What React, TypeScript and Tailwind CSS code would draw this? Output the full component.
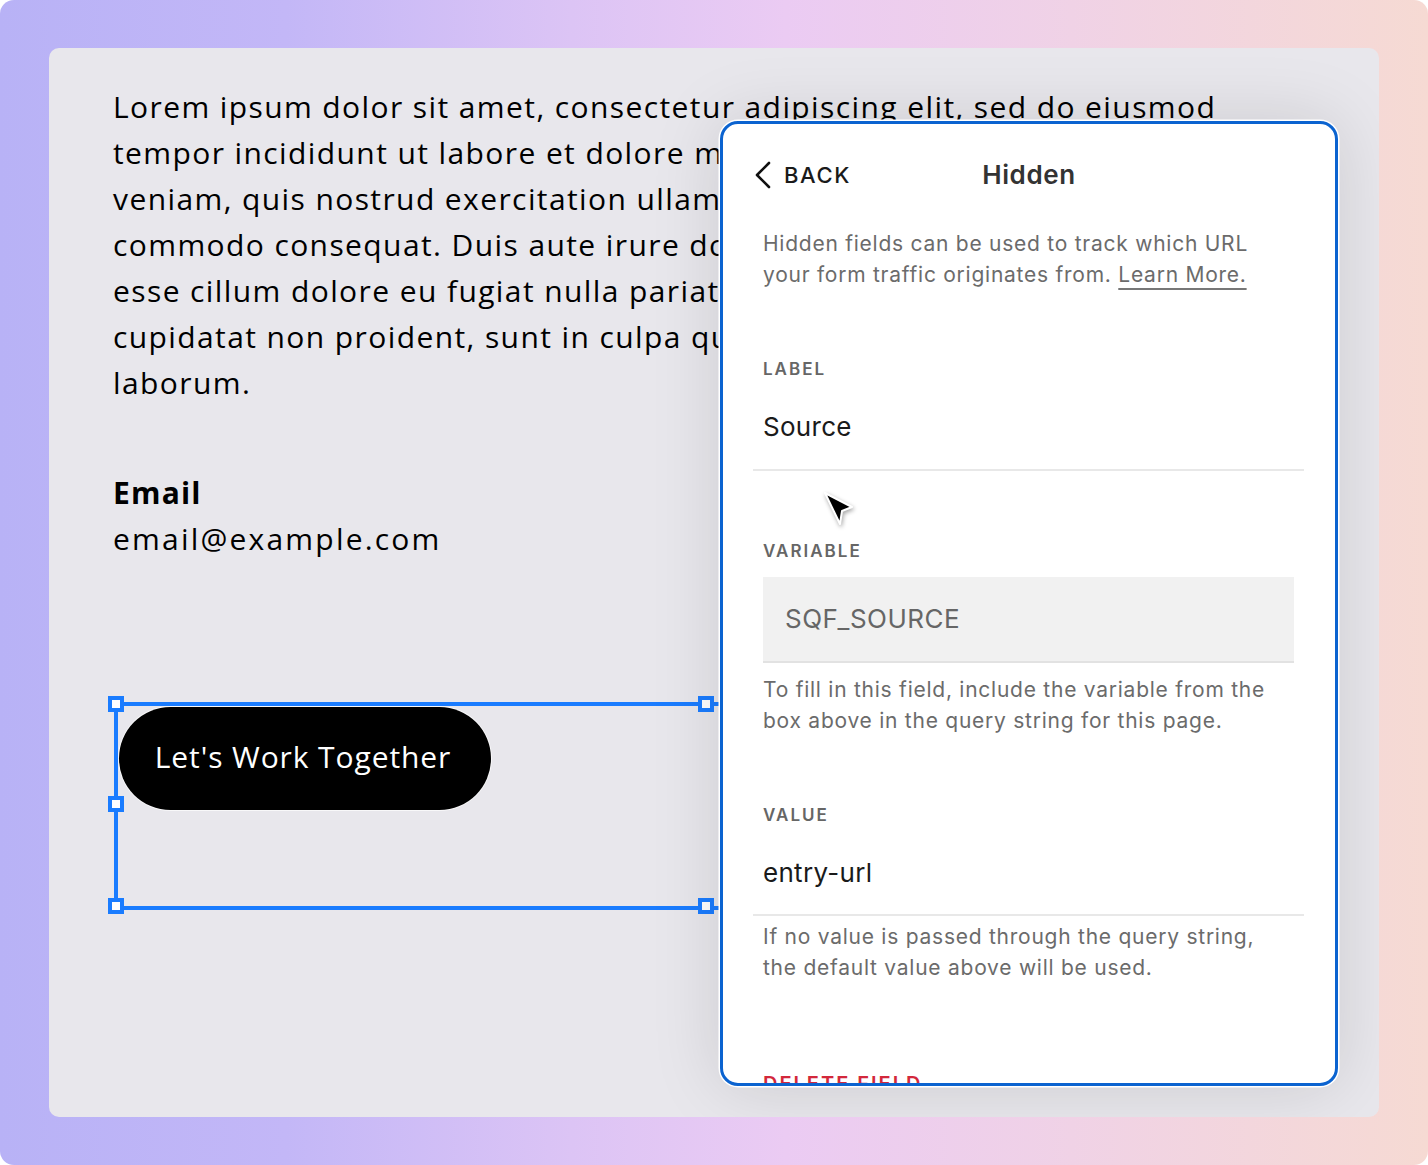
import React from "react";

const leftFont = { fontFamily: '"Open Sans", "Liberation Sans", sans-serif' };

function Handle({ className }: { className: string }) {
  return (
    <div
      className={
        "absolute w-[16px] h-[16px] bg-white border-[4px] border-[#1a7cff] " + className
      }
    />
  );
}

function Cursor() {
  return (
    <svg
      width="40"
      height="44"
      viewBox="0 0 40 44"
      className="absolute left-[772px] top-[441px] drop-shadow-[1px_2px_2px_rgba(0,0,0,0.35)]"
    >
      <polygon
        points="4,4 31,18 21,22 19,35"
        fill="#000"
        stroke="#fff"
        strokeWidth="2"
        strokeLinejoin="round"
      />
    </svg>
  );
}

const labelCls =
  "text-[17px] leading-[20px] font-semibold tracking-[2px] text-[#666]";
const helpCls = "text-[21px] leading-[31px] tracking-[0.75px] text-[#6b6b6b]";
const valueCls = "text-[26px] leading-[32px] tracking-[0.3px] text-[#1a1a1a]";

export default function App() {
  return (
    <div className="w-[1428px] h-[1165px] bg-white">
      <div className="w-full h-full rounded-[14px] bg-[linear-gradient(90deg,#b8b2f6_0%,#c3b7f7_20%,#dcc4f5_40%,#ebcbf3_55%,#f0d2e6_75%,#f6dad3_100%)] pt-[48px] pb-[48px] pl-[49px] pr-[49px]">
        <div
          className="relative h-full rounded-[10px] bg-[#e8e7ec] overflow-hidden pl-[64px] pt-[36px]"
          style={leftFont}
        >
          <div className="text-[30px] leading-[46px] tracking-[1.4px] text-black whitespace-nowrap">
            <div>Lorem ipsum dolor sit amet, consectetur adipiscing elit, sed do eiusmod</div>
            <div>tempor incididunt ut labore et dolore magna aliqua. Ut enim ad minim</div>
            <div>veniam, quis nostrud exercitation ullamco laboris nisi ut aliquip ex ea</div>
            <div>commodo consequat. Duis aute irure dolor in reprehenderit in voluptate velit</div>
            <div>esse cillum dolore eu fugiat nulla pariatur. Excepteur sint occaecat</div>
            <div>cupidatat non proident, sunt in culpa qui officia deserunt mollit anim id est</div>
            <div>laborum.</div>
          </div>

          <div className="mt-[64px] text-[30px] leading-[46px] text-black">
            <div className="font-bold tracking-[1.2px]">Email</div>
            <div className="tracking-[2.2px]">email@example.com</div>
          </div>

          <div className="relative mt-[140px] ml-[1px] w-[660px] h-[208px] border-[4px] border-[#1a7cff]">
            <div className="mt-[1px] ml-[1px] w-[372px] h-[103px] rounded-full bg-black ring-1 ring-white/70 flex items-center justify-center">
              <span className="text-white text-[30px] leading-none tracking-[0.9px] -mt-[4px] -ml-[4px]">
                Let's Work Together
              </span>
            </div>
            <Handle className="-left-[10px] -top-[10px]" />
            <Handle className="left-[580px] -top-[10px]" />
            <Handle className="-left-[10px] top-[90px]" />
            <Handle className="-left-[10px] top-[192px]" />
            <Handle className="left-[580px] top-[192px]" />
          </div>

          {/* Panel overlay */}
          <div
            className="absolute left-[671px] top-[73px] w-[618px] h-[965px] rounded-[18px] border-[3px] border-[#0b63d0] bg-white overflow-hidden shadow-[0_0_0_1.5px_#ffffff,0_0_70px_rgba(0,0,0,0.13)]"
            style={{ fontFamily: 'Inter, "Liberation Sans", sans-serif' }}
          >
            <div className="grid grid-cols-[1fr_auto_1fr] items-center px-[31px] pt-[34px] h-[68px]">
              <div className="flex items-center gap-[12px] h-[34px]">
                <svg width="18" height="28" viewBox="0 0 18 28">
                  <path
                    d="M15 2 L3 14 L15 26"
                    fill="none"
                    stroke="#111"
                    strokeWidth="2.6"
                    strokeLinecap="round"
                    strokeLinejoin="round"
                  />
                </svg>
                <span className="text-[22px] font-medium tracking-[1.6px] text-[#1a1a1a] leading-none">
                  BACK
                </span>
              </div>
              <div className="text-[26px] font-semibold tracking-[0.6px] text-[#333] leading-none">
                Hidden
              </div>
              <div />
            </div>

            <div className="pl-[40px] pr-[31px] whitespace-nowrap">
              <p className={"mt-[36px] " + helpCls}>
                Hidden fields can be used to track which URL
                <br />
                your form traffic originates from.{" "}
                <span className="underline decoration-[1.5px] underline-offset-[6px] decoration-[#777]">
                  Learn More.
                </span>
              </p>

              <div className={"mt-[69px] " + labelCls}>LABEL</div>
              <div className={"mt-[32px] " + valueCls}>Source</div>
              <div className="mt-[26px] -ml-[10px] h-[2px] bg-[#e8e8e8]" />

              <div className={"mt-[70px] " + labelCls}>VARIABLE</div>
              <div className="mt-[16px] mr-[10px] h-[86px] bg-[#f1f1f1] border-b-[2px] border-[#e2e2e2] flex items-center pl-[22px]">
                <span className="text-[26px] tracking-[0.5px] text-[#666] leading-none">
                  SQF_SOURCE
                </span>
              </div>
              <p className={"mt-[11px] " + helpCls}>
                To fill in this field, include the variable from the
                <br />
                box above in the query string for this page.
              </p>

              <div className={"mt-[69px] " + labelCls}>VALUE</div>
              <div className={"mt-[32px] " + valueCls}>entry-url</div>
              <div className="mt-[25px] -ml-[10px] h-[2px] bg-[#e8e8e8]" />
              <p className={"mt-[5px] " + helpCls}>
                If no value is passed through the query string,
                <br />
                the default value above will be used.
              </p>

              <div className="mt-[89px] text-[20px] leading-[24px] font-semibold tracking-[2px] text-[#d3283b]">
                DELETE FIELD
              </div>
            </div>
          </div>

          <Cursor />
        </div>
      </div>
    </div>
  );
}
